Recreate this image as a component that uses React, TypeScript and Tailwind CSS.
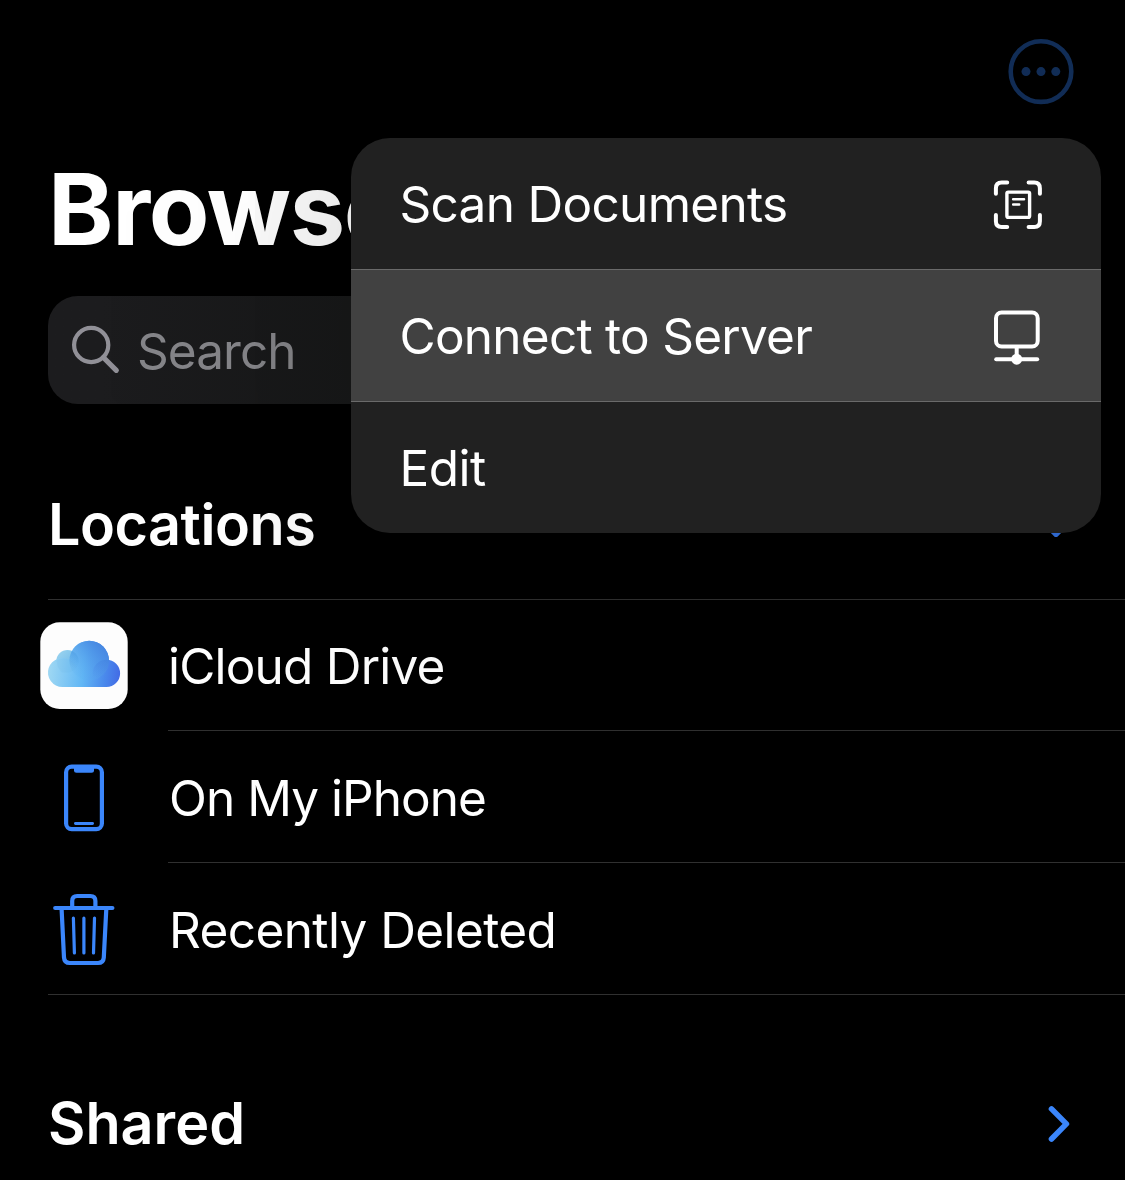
import type { ReactNode } from "react";

const BLUE = "#3b86fb";

function MoreIcon() {
  return (
    <svg width="66" height="66" viewBox="0 0 66 66" fill="none">
      <circle cx="33" cy="32.6" r="30.3" stroke="#122f5a" strokeWidth="4.6" />
      <circle cx="18" cy="32.6" r="4.5" fill="#122f5a" />
      <circle cx="33" cy="32.6" r="4.5" fill="#122f5a" />
      <circle cx="47.8" cy="32.6" r="4.5" fill="#122f5a" />
    </svg>
  );
}

function SearchIcon() {
  return (
    <svg width="50" height="50" viewBox="0 0 50 50" fill="none" stroke="#919097" strokeLinecap="round">
      <circle cx="21.2" cy="20" r="17.1" strokeWidth="4.2" />
      <path d="M33.4 32.5L46.3 45.3" strokeWidth="5.2" />
    </svg>
  );
}

function ScanIcon() {
  return (
    <svg width="50" height="50" viewBox="0 0 50 50" fill="none" stroke="#fff" strokeLinecap="round">
      <path
        d="M2.9 13.8V8.4Q2.9 2.6 8.7 2.6H14.2M35.6 2.6H41.3Q46.9 2.6 46.9 8.4V13.8M46.9 35V41.2Q46.9 47 41.3 47H35.6M14.2 47H8.7Q2.9 47 2.9 41.2V35"
        strokeWidth="4"
      />
      <rect x="13.9" y="12.1" width="22.7" height="25.3" rx="1.4" strokeWidth="3.4" />
      <path d="M20.2 19.2H31M20.2 24.5H26.2" strokeWidth="2.6" />
    </svg>
  );
}

function ServerIcon() {
  return (
    <svg width="50" height="58" viewBox="0 0 50 58" fill="none" stroke="#fff" strokeLinecap="round">
      <rect x="3" y="4.6" width="41.7" height="34" rx="5.6" strokeWidth="4" />
      <path d="M23.7 38.5V49" strokeWidth="4" strokeLinecap="butt" />
      <path d="M3.2 51.2H44.2" strokeWidth="4" />
      <circle cx="23.7" cy="51.2" r="5.5" fill="#fff" stroke="none" />
    </svg>
  );
}

function ChevronDown() {
  return (
    <svg width="38" height="24" viewBox="0 0 38 24" fill="none">
      <path d="M4 5.8L19 21.4L34 5.8" stroke="#326fda" strokeWidth="5.4" strokeLinecap="round" strokeLinejoin="round" />
    </svg>
  );
}

function ChevronRight() {
  return (
    <svg width="24" height="38" viewBox="0 0 24 38" fill="none">
      <path d="M4.5 3.9L19.4 18.9L4.5 34" stroke={BLUE} strokeWidth="5.6" strokeLinecap="round" strokeLinejoin="round" />
    </svg>
  );
}

function CloudIcon() {
  return (
    <svg width="88" height="88" viewBox="0 0 88 88">
      <defs>
        <linearGradient id="base" x1="8" x2="80" y1="50" y2="58" gradientUnits="userSpaceOnUse">
          <stop offset="0" stopColor="#9fd8f3" />
          <stop offset=".48" stopColor="#62b7f5" />
          <stop offset=".78" stopColor="#4a8aec" />
          <stop offset="1" stopColor="#426ae5" />
        </linearGradient>
        <linearGradient id="puff" x1="34" x2="64" y1="60" y2="26" gradientUnits="userSpaceOnUse">
          <stop offset="0" stopColor="#5eb4f3" stopOpacity="0" />
          <stop offset="1" stopColor="#4788e2" />
        </linearGradient>
        <linearGradient id="small" x1="18" x2="36" y1="30" y2="46" gradientUnits="userSpaceOnUse">
          <stop offset="0" stopColor="#9ad3ef" />
          <stop offset="1" stopColor="#69b6e9" />
        </linearGradient>
        <linearGradient id="overlap" x1="0" x2="0" y1="28" y2="46" gradientUnits="userSpaceOnUse">
          <stop offset="0" stopColor="#3f92dc" stopOpacity=".4" />
          <stop offset="1" stopColor="#3f92dc" stopOpacity="0" />
        </linearGradient>
        <linearGradient id="right" x1="0" x2="0" y1="38" y2="56" gradientUnits="userSpaceOnUse">
          <stop offset="0" stopColor="#3d78dc" stopOpacity=".3" />
          <stop offset="1" stopColor="#4574e4" stopOpacity="0" />
        </linearGradient>
        <clipPath id="main">
          <circle cx="49.2" cy="38.6" r="19.8" />
        </clipPath>
      </defs>
      <rect x=".3" y=".3" width="87.4" height="86.6" rx="19.5" fill="#fdfdfd" />
      <circle cx="27.5" cy="39.2" r="11.2" fill="url(#small)" />
      <path d="M22.5 65A14.5 14.5 0 1 1 31 38.8L49 30L66.6 37.8A13.6 13.6 0 0 1 66.4 65Z" fill="url(#base)" />
      <circle cx="49.2" cy="38.6" r="19.8" fill="url(#base)" />
      <circle cx="49.2" cy="38.6" r="19.8" fill="url(#puff)" />
      <g clipPath="url(#main)">
        <circle cx="27.5" cy="39.2" r="11.2" fill="url(#overlap)" />
        <circle cx="66.4" cy="51.4" r="13.6" fill="url(#right)" />
      </g>
      <path d="M16.5 38.2Q24 34.5 31.5 38.8Q35 41 37 44.5Q34.5 49 29 50.4H22Q17 46 16.5 38.2Z" fill="#62b0e2" opacity=".12" />
    </svg>
  );
}

function PhoneIcon() {
  return (
    <svg width="88" height="88" viewBox="0 0 88 88" fill="none">
      <rect x="26.1" y="13.6" width="35.8" height="62.6" rx="5.6" stroke={BLUE} strokeWidth="4.2" />
      <path d="M34 14H54V17.2Q54 19.7 51.5 19.7H36.5Q34 19.7 34 17.2Z" fill={BLUE} />
      <path d="M35.4 70.5H52.6" stroke={BLUE} strokeWidth="2.8" strokeLinecap="round" />
    </svg>
  );
}

function TrashIcon() {
  return (
    <svg width="88" height="88" viewBox="0 0 88 88" fill="none" stroke={BLUE} strokeLinecap="round">
      <path d="M15.2 23H72.4" strokeWidth="4.2" />
      <path d="M32.2 22V16Q32.2 11 37.2 11H50.4Q55.4 11 55.4 16V22" strokeWidth="4.2" />
      <path d="M21.6 24L24 72.5Q24.4 78 29.8 78H58Q63.4 78 63.8 72.5L66.3 24" strokeWidth="4.2" />
      <path d="M33.4 33.2L34.4 68M43.9 33.2V68M54.5 33.2L53.5 68" strokeWidth="3.2" />
    </svg>
  );
}

function LocationRow({ icon, last, children }: { icon: ReactNode; last?: boolean; children: ReactNode }) {
  return (
    <li className="flex h-[132px] pl-10">
      <div className="mr-10 flex w-[88px] shrink-0 items-center">{icon}</div>
      <div className={last ? "flex flex-1 items-center pt-[3px]" : "flex flex-1 items-center border-b border-[#303030] pt-[5px]"}>
        {children}
      </div>
    </li>
  );
}

export default function App() {
  return (
    <main className="relative flex h-[1180px] w-[1125px] flex-col overflow-hidden bg-black font-['Inter',sans-serif] text-[49.5px] leading-none text-white">
      <header className="flex h-[138px] justify-end pt-[39px] pr-[51.5px]">
        <button aria-label="More" className="h-[66px]">
          <MoreIcon />
        </button>
      </header>
      <h1 className="flex h-[158px] items-center pb-4 pl-[48px] text-[99px] font-bold tracking-[-1.3px]">Browse</h1>
      <div className="mr-12 ml-12 flex h-[108px] items-center gap-[17px] rounded-[30px] bg-linear-to-r from-[#1c1c1e] from-5% to-[#161717] to-35% pl-[22px]">
        <SearchIcon />
        <span className="pt-[3px] tracking-[-0.95px] text-[#858589]">Search</span>
      </div>

      <section>
        <div className="ml-12 flex h-[196px] items-center justify-between border-b border-[#303030] pt-[46px] pr-[50px]">
          <h2 className="text-[57.5px] font-semibold tracking-[-0.5px]">Locations</h2>
          <ChevronDown />
        </div>
        <ul className="-mt-px">
          <LocationRow
            icon={
              <div className="pt-0.5">
                <CloudIcon />
              </div>
            }
          >
            <span className="tracking-[-0.8px]">iCloud Drive</span>
          </LocationRow>
          <LocationRow icon={<PhoneIcon />}>
            <span className="ml-px tracking-[-0.96px]">On My iPhone</span>
          </LocationRow>
          <LocationRow icon={<TrashIcon />} last>
            <span className="ml-px tracking-[-0.6px]">Recently Deleted</span>
          </LocationRow>
        </ul>
      </section>

      <section className="-mt-px ml-12 flex flex-1 items-center justify-between border-t border-[#303030] pt-[72px] pr-[54px]">
        <h2 className="text-[57.5px] font-semibold">Shared</h2>
        <ChevronRight />
      </section>

      <nav className="absolute top-[138px] left-[351px] flex h-[395px] w-[750px] flex-col overflow-hidden rounded-[39px] bg-[#212121] shadow-[0_0_240px_rgba(0,0,0,0.25)]">
        <button className="flex h-[131px] items-center justify-between pt-[3px] pr-[58.5px] pl-[48.5px]">
          <span className="tracking-[-0.7px]">Scan Documents</span>
          <ScanIcon />
        </button>
        <button className="flex h-[133px] items-center justify-between border-y border-[#6a6a6a] bg-[#414141] pt-[3px] pr-[58px] pl-[48.5px]">
          <span className="tracking-[-0.75px]">Connect to Server</span>
          <ServerIcon />
        </button>
        <button className="flex h-[131px] items-center pt-[3px] pl-[48.5px]">
          <span className="tracking-[-0.5px]">Edit</span>
        </button>
      </nav>
    </main>
  );
}
